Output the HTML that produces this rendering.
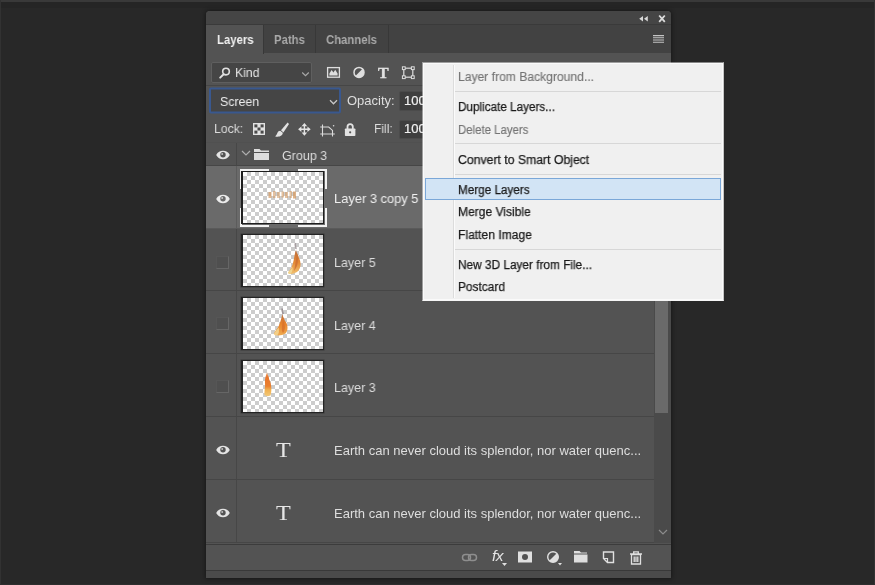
<!DOCTYPE html>
<html>
<head>
<meta charset="utf-8">
<title>Layers</title>
<style>
html,body{margin:0;padding:0;}
body{width:875px;height:585px;background:#282828;position:relative;overflow:hidden;font-family:"Liberation Sans",sans-serif;font-size:13px;color:#dcdcdc;}
.abs{position:absolute;}
.t{position:absolute;will-change:transform;white-space:nowrap;line-height:16px;transform-origin:0 50%;}
#topstrip{left:0;top:0;width:875px;height:1.5px;background:#393939;}
#panel{left:206px;top:11px;width:465px;height:567px;background:#535353;border-radius:4px 4px 0 0;overflow:hidden;box-shadow:0 0 4px 1px rgba(0,0,0,.4);}
#titlebar{left:0;top:0;width:465px;height:13px;background:#454545;}
#tabrow{left:0;top:13px;width:465px;height:29px;background:#424242;border-top:1px solid #3a3a3a;box-sizing:border-box;}
.tab{position:absolute;top:0;height:28px;box-sizing:border-box;border-right:1px solid #383838;}
.tab span{position:absolute;will-change:transform;top:7px;font-weight:bold;white-space:nowrap;transform-origin:0 50%;transform:scaleX(.87);line-height:16px;color:#a9a9a9;}
#tabL{left:0;width:58px;background:#535353;height:29px;}
#tabL span{color:#f0f0f0;}
.dd{position:absolute;box-sizing:border-box;background:#454545;border:1px solid #5f5f5f;border-radius:2px;}
.field{position:absolute;box-sizing:border-box;background:#3e3e3e;border:1px solid #4b4b4b;border-radius:2px;}
.row{position:absolute;left:0;width:448px;box-sizing:border-box;border-bottom:1px solid #464646;}
.eyecol{position:absolute;left:0;top:0;bottom:0;width:30px;border-right:1px solid #474747;}
.thumb{position:absolute;left:35px;width:83px;height:53px;background:#242424;box-shadow:0 0 0 .5px #3a3a3a;}
.chk{position:absolute;left:1.500px;top:1px;width:80.500px;height:51px;
 background-color:#fff;
 background-image:linear-gradient(45deg,#ccc 25%,transparent 25%,transparent 75%,#ccc 75%),linear-gradient(45deg,#ccc 25%,transparent 25%,transparent 75%,#ccc 75%);
 background-size:8px 8px;background-position:0 0,4px 4px;}
.hid{position:absolute;left:10px;width:12.5px;height:13px;box-sizing:border-box;background:#4f4f4f;border:1px solid #565656;border-right-color:#666;border-bottom-color:#666;}
.lname{position:absolute;left:128.3px;will-change:transform;transform-origin:0 50%;white-space:nowrap;line-height:16px;color:#dedede;}
#menu{left:422px;top:62px;width:302px;height:239px;background:#f0f0f0;background-clip:padding-box;border:1px solid #f6f6f6;border-top-color:rgba(250,250,250,.45);border-left-color:rgba(250,250,250,.45);border-right-color:rgba(250,250,250,.75);box-sizing:border-box;box-shadow:inset 0 0 0 1px #fafafa;}
.mi{position:absolute;will-change:transform;left:34.9px;-webkit-text-stroke:.25px currentColor;white-space:nowrap;line-height:16px;font-size:12.5px;color:#1a1a1a;transform-origin:0 50%;transform:scaleX(.95);}
.mi.dis{color:#747474;-webkit-text-stroke:.15px currentColor;}
.sep{position:absolute;left:32px;right:2px;height:1px;background:#d7d7d7;}
</style>
</head>
<body>
<div id="topstrip" class="abs"></div>
<div class="abs" style="left:0;top:1.5px;width:875px;height:6px;background:#252525"></div>
<div class="abs" style="left:0;top:0;width:1px;height:585px;background:#323232"></div>
<div class="abs" style="left:874px;top:0;width:1px;height:585px;background:#323232"></div>
<div class="abs" style="left:0;top:584px;width:875px;height:1px;background:#2e2e2e"></div>
<div id="panel" class="abs">
  <div id="titlebar" class="abs">
    <svg class="abs" style="left:432px;top:3px" width="30" height="10" viewBox="0 0 30 10">
      <path d="M5 2 L5 7.400 L1.200 4.700Z M9.800 2 L9.800 7.400 L6 4.700Z" fill="#d8d8d8"/>
      <path d="M21.200 1.500 L26.800 7.900 M26.800 1.500 L21.200 7.900" stroke="#dcdcdc" stroke-width="1.800" fill="none"/>
    </svg>
  </div>
  <div id="tabrow" class="abs">
    <div class="tab" id="tabL"><span style="left:11px">Layers</span></div>
    <div class="tab" style="left:58px;width:52px"><span style="left:10px">Paths</span></div>
    <div class="tab" style="left:110px;width:73px"><span style="left:10px">Channels</span></div>
    <svg class="abs" style="left:447px;top:10px" width="12" height="9" viewBox="0 0 12 9">
      <path d="M0 .600H11M0 2.800H11M0 5H11M0 7.200H11" stroke="#c4c4c4" stroke-width="1.100"/>
    </svg>
  </div>

  <!-- filter row -->
  <div class="dd" style="left:5px;top:51px;width:101px;height:21px"></div>
  <svg class="abs" style="left:12px;top:55px" width="14" height="14" viewBox="0 0 14 14">
    <circle cx="8" cy="5.600" r="3.300" fill="none" stroke="#e0e0e0" stroke-width="1.600"/>
    <path d="M5.600 8.200 L2.200 11.600" stroke="#e0e0e0" stroke-width="2" stroke-linecap="round"/>
  </svg>
  <span class="t" style="left:29px;top:54px;color:#e6e6e6;transform:scaleX(.94)">Kind</span>
  <svg class="abs" style="left:94.500px;top:59.500px" width="9" height="7" viewBox="0 0 9 7"><path d="M1.200 1.500 L4.500 4.600 L7.800 1.500" fill="none" stroke="#a8a8a8" stroke-width="1.200"/></svg>

  <!-- filter icons -->
  <svg class="abs" style="left:120px;top:54px" width="100" height="16" viewBox="0 0 100 16">
    <g fill="none" stroke="#dedede" stroke-width="1.300">
      <rect x="1.600" y="2.600" width="11.800" height="9.600"/>
    </g>
    <path d="M3.400 10.400 V8.600 L5.600 5 L7.400 7.600 L9.200 4.800 L11.600 8.600 V10.400Z" fill="#dedede"/>
    <circle cx="33" cy="7.400" r="5" fill="none" stroke="#dedede" stroke-width="1.500"/>
    <path d="M29.400 11 A5 5 0 0 0 36.600 3.800Z" fill="#dedede"/>
    <g fill="none" stroke="#dedede" stroke-width="1.200">
      <rect x="77.800" y="3.200" width="9" height="9"/>
    </g>
    <g fill="#505050" stroke="#dedede" stroke-width="1"><rect x="76.400" y="1.800" width="2.800" height="2.800"/><rect x="85.400" y="1.800" width="2.800" height="2.800"/><rect x="76.400" y="10.800" width="2.800" height="2.800"/><rect x="85.400" y="10.800" width="2.800" height="2.800"/></g>
  </svg>
  <span class="t" style="left:171.8px;top:53.5px;font-family:'Liberation Serif',serif;font-weight:bold;font-size:14.3px;color:#e2e2e2;-webkit-text-stroke:.3px #e2e2e2;transform:scaleX(1.12)">T</span>

  <div class="abs" style="left:0;top:74px;width:465px;height:1px;background:#464646"></div>
  <!-- blend row -->
  <div class="dd" style="left:3px;top:76px;width:132px;height:26px;border:2px solid #39588f;background:#454545;border-radius:2px;transform:translateY(.5px)"></div>
  <span class="t" style="left:14px;top:83px;color:#ececec;transform:scaleX(.95)">Screen</span>
  <svg class="abs" style="left:122.500px;top:88px" width="9" height="7" viewBox="0 0 9 7"><path d="M1 1.3 L4.5 4.8 L8 1.3" fill="none" stroke="#c8c8c8" stroke-width="1.3"/></svg>
  <span class="t" style="left:141px;top:82px;color:#dedede">Opacity:</span>
  <div class="field" style="left:192.500px;top:79.5px;width:60px;height:20px"></div>
  <span class="t" style="left:197.7px;top:82px;color:#f0f0f0;-webkit-text-stroke:.2px #f0f0f0">100</span>

  <!-- lock row -->
  <span class="t" style="left:8px;top:109.5px;color:#dcdcdc;transform:scaleX(.94)">Lock:</span>
  <svg class="abs" style="left:44px;top:110px" width="110" height="18" viewBox="0 0 110 18">
    <!-- checker: page x 253-265, y 123-135 -->
    <rect x="3" y="2" width="12" height="12" fill="#e2e2e2"/>
    <g fill="#4a4a4a"><rect x="4.400" y="3.400" width="3" height="3"/><rect x="10.600" y="3.400" width="3" height="3"/><rect x="7.500" y="6.500" width="3" height="3"/><rect x="4.400" y="9.600" width="3" height="3"/><rect x="10.600" y="9.600" width="3" height="3"/></g>
    <!-- brush -->
    <path d="M37.600 1.600 L31 9.200 L33.400 11.400 L39 3Z" fill="#e2e2e2"/>
    <path d="M30.200 9.800 C27.200 9.800 27.600 13.400 25.200 15.400 C29 16.400 33 14.800 32.800 11.800Z" fill="#e2e2e2"/>
    <!-- move -->
    <g stroke="#e2e2e2" stroke-width="1.400" fill="none"><path d="M54.400 4V12.600M50 8.300H58.800"/></g>
    <path d="M54.400 1.900 L57.200 5.200 H51.600Z M54.400 14.700 L57.200 11.400 H51.600Z M48.100 8.300 L51.400 5.500 V11.100Z M60.700 8.300 L57.400 5.500 V11.100Z" fill="#e2e2e2"/>
    <!-- artboard crop -->
    <g stroke="#dadada" stroke-width="1.100" fill="none"><path d="M72.500 3.600V15.400M70.200 6H78.700L82.500 9.400V15.400M70.200 13H84.800"/></g>
    <circle cx="83.600" cy="4.700" r=".800" fill="#dadada"/>
    <!-- lock -->
    <rect x="94.900" y="7.400" width="10.500" height="7.600" rx=".8" fill="#e2e2e2"/>
    <path d="M97.500 8 V5.800 A2.650 2.650 0 0 1 102.800 5.800 V8" fill="none" stroke="#e2e2e2" stroke-width="1.800"/>
    <circle cx="100.150" cy="11.300" r="1.100" fill="#535353"/>
  </svg>
  <span class="t" style="left:168px;top:110px;color:#dcdcdc;transform:scaleX(.93)">Fill:</span>
  <div class="field" style="left:192.500px;top:109px;width:60px;height:19px"></div>
  <span class="t" style="left:197.7px;top:110px;color:#f0f0f0;-webkit-text-stroke:.2px #f0f0f0">100</span>

  <!-- layer list -->
  <div class="abs" style="left:0;top:131px;width:448px;height:1px;background:#505050"></div>
  <div class="row" style="top:132px;height:23px">
    <div class="eyecol"></div>
    <svg class="abs eye" style="left:9.500px;top:6.5px" width="14" height="10" viewBox="0 0 14 10"><path d="M.200 5 C2.800 -.600 11.200 -.600 13.800 5 C11.200 10.600 2.800 10.600 .200 5Z" fill="#e4e4e4"/><circle cx="7" cy="4.800" r="2.700" fill="#535353"/><circle cx="6.200" cy="4" r="1" fill="#e4e4e4" opacity=".75"/></svg>
    <svg class="abs" style="left:35px;top:7px" width="10" height="7" viewBox="0 0 10 7"><path d="M1 1 L5 5 L9 1" fill="none" stroke="#adadad" stroke-width="1.200"/></svg>
    <svg class="abs" style="left:47px;top:5px" width="17" height="13" viewBox="0 0 17 13"><path d="M1 1 H6.5 L8 2.6 H16 V4 H1Z M1 5 H16 V12 H1Z" fill="#dedede"/></svg>
    <span class="lname" style="left:75.8px;top:4.5px;transform-origin:0 50%;transform:scaleX(.96)">Group 3</span>
  </div>

  <div class="row" style="top:155px;height:63px;background:#6a6a6a;border-bottom-color:#5a5a5a">
    <div class="eyecol" style="border-right-color:#5c5c5c"></div>
    <svg class="abs eye" style="left:9.500px;top:27.5px" width="14" height="10" viewBox="0 0 14 10"><path d="M.200 5 C2.800 -.600 11.200 -.600 13.800 5 C11.200 10.600 2.800 10.600 .200 5Z" fill="#ececec"/><circle cx="7" cy="4.800" r="2.700" fill="#6a6a6a"/><circle cx="6.200" cy="4" r="1" fill="#ececec" opacity=".75"/></svg>
    <!-- bracket frame -->
    <svg class="abs" style="left:34px;top:3px" width="87" height="58" viewBox="0 0 87 58">
      <path d="M1 20 V1 H29 M58 1 H86 V20 M86 39 V57 H58 M29 57 H1 V39" fill="none" stroke="#f2f2f2" stroke-width="2"/>
    </svg>
    <div class="thumb" style="top:5px;background:#1e1e1e;box-shadow:none"><div class="chk"></div>
      <svg class="abs" style="left:26px;top:18px;filter:blur(.6px)" width="32" height="12" viewBox="0 0 32 12">
        <g fill="#d49a62"><rect x="1.500" y="3" width="3" height="6" opacity=".7"/><rect x="6" y="2" width="2.500" height="7" opacity=".6"/><rect x="10" y="3" width="3" height="6" opacity=".55"/><rect x="14.500" y="2.500" width="2.500" height="6" opacity=".6"/><rect x="18" y="3" width="3" height="6" opacity=".6"/><rect x="22.500" y="2" width="2.500" height="7" opacity=".55"/><rect x="26" y="2.500" width="3" height="7" opacity=".75"/></g>
      </svg>
    </div>
    <span class="lname" style="top:25.3px;color:#f0f0f0;transform:scaleX(.99)">Layer 3 copy 5</span>
  </div>

  <div class="row" style="top:218px;height:62px">
    <div class="eyecol"></div>
    <div class="hid" style="top:26.5px"></div>
    <div class="thumb" style="top:5px"><div class="chk"></div>
      <svg class="abs" style="left:40px;top:4px;filter:blur(.5px)" width="30" height="40" viewBox="0 0 30 40">
        <defs><linearGradient id="fg5" x1="0" y1="0" x2="0" y2="1"><stop offset="0" stop-color="#b8683a"/><stop offset=".55" stop-color="#e58a35"/><stop offset="1" stop-color="#efc070"/></linearGradient></defs>
        <path d="M14.500 5 C13.500 7 15 9 15 11" stroke="#9c9296" stroke-width="1.600" fill="none" opacity=".8"/>
        <path d="M15.500 10.500 C14 14 17.500 16 18 20 C20.500 25 20 31 16 34 C12 36.500 8 36.500 7 34.500 C9.500 32 11.500 28 12.500 23 C13.500 18 14 14 15.500 10.500Z" fill="url(#fg5)"/>
        <path d="M16 16 C17.500 21 17.500 28 13 33 C14 28 15 22 16 16Z" fill="#c86a30" opacity=".75"/>
        <path d="M7 34.500 C8.500 33 10.500 31 11.500 29 C12 32 11 35 9 36 C8 36 7 35.500 7 34.500Z" fill="#f0d590"/>
      </svg>
    </div>
    <span class="lname" style="top:25.5px;transform:scaleX(.96)">Layer 5</span>
  </div>

  <div class="row" style="top:280px;height:63px">
    <div class="eyecol"></div>
    <div class="hid" style="top:26px"></div>
    <div class="thumb" style="top:6px"><div class="chk"></div>
      <svg class="abs" style="left:30px;top:9px;filter:blur(.5px)" width="20" height="32" viewBox="0 0 20 32">
        <defs><linearGradient id="fg4" x1="0" y1="0" x2="0" y2="1"><stop offset="0" stop-color="#b86a40"/><stop offset=".5" stop-color="#e8842c"/><stop offset="1" stop-color="#eeaa50"/></linearGradient></defs>
        <path d="M11.300 2.500 C10.500 4.500 12 6 12 8" stroke="#8e8488" stroke-width="1.600" fill="none" opacity=".85"/>
        <path d="M12 6.500 C10.500 10 13.500 12 14 15 C17 18 17.500 24 14.500 27.500 C10.500 30 5 30 3 28 C3.500 25 6 23.500 7.500 20.500 C9.500 16.500 10.500 11 12 6.500Z" fill="url(#fg4)"/>
        <path d="M12 14 C14 18 15 23 12 27 C10 25 11 19 12 14Z" fill="#d8702a" opacity=".8"/>
        <path d="M3 28 C4 25.500 6 24 7.500 21.500 C8.500 25 8 28.500 5.500 29.500 C4.500 29.500 3.500 29 3 28Z" fill="#f3cf88"/>
      </svg>
    </div>
    <span class="lname" style="top:26.8px;transform:scaleX(.96)">Layer 4</span>
  </div>

  <div class="row" style="top:343px;height:63px">
    <div class="eyecol"></div>
    <div class="hid" style="top:26px"></div>
    <div class="thumb" style="top:6px"><div class="chk"></div>
      <svg class="abs" style="left:20px;top:9px;filter:blur(.5px)" width="14" height="30" viewBox="0 0 14 30">
        <defs><linearGradient id="fg3" x1="0" y1="0" x2="0" y2="1"><stop offset="0" stop-color="#f0b888"/><stop offset=".25" stop-color="#e8742a"/><stop offset=".6" stop-color="#ea8030"/><stop offset=".75" stop-color="#f0b050"/><stop offset="1" stop-color="#f2c878"/></linearGradient></defs>
        <path d="M6.500 2 C5 5 8.500 7 8 10 C10.500 14 11 22 9.500 26.500 C7 27.500 4.500 27.500 3.500 26 C3 22 4.500 18 4 14 C3.500 10 5 6 6.500 2Z" fill="url(#fg3)"/>
      </svg>
    </div>
    <span class="lname" style="top:26.3px;transform:scaleX(.96)">Layer 3</span>
  </div>

  <div class="row" style="top:406px;height:63px">
    <div class="eyecol"></div>
    <svg class="abs eye" style="left:9.500px;top:27.5px" width="14" height="10" viewBox="0 0 14 10"><path d="M.200 5 C2.800 -.600 11.200 -.600 13.800 5 C11.200 10.600 2.800 10.600 .200 5Z" fill="#e4e4e4"/><circle cx="7" cy="4.800" r="2.700" fill="#535353"/><circle cx="6.200" cy="4" r="1" fill="#e4e4e4" opacity=".75"/></svg>
    <span class="abs" style="left:69.5px;top:20.5px;font-family:'Liberation Serif',serif;font-size:22px;line-height:24px;color:#e6e6e6;will-change:transform;transform-origin:0 50%;transform:scaleX(1.1)">T</span>
    <span class="lname" style="top:26.4px">Earth can never cloud its splendor, nor water quenc...</span>
  </div>

  <div class="row" style="top:469px;height:62.5px">
    <div class="eyecol"></div>
    <svg class="abs eye" style="left:9.500px;top:27.5px" width="14" height="10" viewBox="0 0 14 10"><path d="M.200 5 C2.800 -.600 11.200 -.600 13.800 5 C11.200 10.600 2.800 10.600 .200 5Z" fill="#e4e4e4"/><circle cx="7" cy="4.800" r="2.700" fill="#535353"/><circle cx="6.200" cy="4" r="1" fill="#e4e4e4" opacity=".75"/></svg>
    <span class="abs" style="left:69.5px;top:20.5px;font-family:'Liberation Serif',serif;font-size:22px;line-height:24px;color:#e6e6e6;will-change:transform;transform-origin:0 50%;transform:scaleX(1.1)">T</span>
    <span class="lname" style="top:26.2px">Earth can never cloud its splendor, nor water quenc...</span>
  </div>

  <!-- scrollbar -->
  <div class="abs" style="left:448px;top:132px;width:17px;height:400px;background:#4a4a4a"></div>
  <div class="abs" style="left:449px;top:132px;width:13px;height:270px;background:#6a6a6a"></div>
  <svg class="abs" style="left:452px;top:518px" width="10" height="7" viewBox="0 0 10 7"><path d="M1 1 L5 5 L9 1" fill="none" stroke="#8c8c8c" stroke-width="1.2"/></svg>

  <!-- bottom bar -->
  <div class="abs" style="left:0;top:532.5px;width:465px;height:1.5px;background:#3c3c3c"></div>
  <div class="abs" style="left:0;top:534px;width:465px;height:25px;background:#535353"></div>
  <div class="abs" style="left:0;top:559px;width:465px;height:8px;background:#4b4b4b;border-top:1.5px solid #393939;box-sizing:border-box"></div>
  <svg class="abs" style="left:250px;top:535.5px" width="200" height="22" viewBox="0 0 200 22">
    <!-- link -->
    <g fill="none" stroke="#8e8e8e" stroke-width="1.5"><rect x="6.5" y="7.5" width="8" height="6" rx="3"/><rect x="12.500" y="7.5" width="8" height="6" rx="3"/></g>
    <!-- mask -->
    <rect x="62" y="4.500" width="14" height="11" fill="#e0e0e0"/><circle cx="69" cy="10" r="3" fill="#535353"/>
    <!-- adj -->
    <circle cx="97" cy="10" r="5.300" fill="none" stroke="#e0e0e0" stroke-width="1.4"/><path d="M93.200 13.800 A5.300 5.300 0 0 0 100.800 6.200Z" fill="#e0e0e0"/><path d="M102 16 h4 l-2 2.500z" fill="#e0e0e0"/>
    <!-- folder -->
    <path d="M118 4 H123.500 L125 5.500 H131 V6.500 H118Z M118 7.500 H131.500 V15.500 H118Z" fill="#dedede"/>
    <!-- new layer -->
    <path d="M147.500 5 H157.500 V15.500 H151.500 L147.500 11.500Z" fill="none" stroke="#e0e0e0" stroke-width="1.4"/><path d="M147.500 11.500 H151.500 V15.500" fill="none" stroke="#e0e0e0" stroke-width="1.200"/>
    <!-- trash -->
    <g fill="none" stroke="#e0e0e0" stroke-width="1.300"><path d="M175.500 7.500 H184.500 V17 H175.500Z M174 7 H186 M177.700 6.500 V4.800 H182.300 V6.500 M178.200 9.500 V15 M180 9.500 V15 M181.800 9.500 V15"/></g>
  </svg>
  <span class="t" style="left:285.5px;top:537px;font-style:italic;font-size:15.5px;color:#e4e4e4;letter-spacing:-.5px">fx</span>
  <svg class="abs" style="left:295.500px;top:551.500px" width="6" height="4" viewBox="0 0 6 4"><path d="M0 0 h5 l-2.500 3z" fill="#e0e0e0"/></svg>
</div>

<!-- context menu -->
<div id="menu" class="abs">
  <div class="abs" style="left:30px;top:2px;bottom:2px;width:1px;background:#dcdcdc"></div>
  <div class="abs" style="left:31px;top:2px;bottom:2px;width:1px;background:#fbfbfb"></div>
  <span class="mi dis" style="top:6.4px;transform:scaleX(.969)">Layer from Background...</span>
  <div class="sep" style="top:28px"></div>
  <span class="mi" style="top:36.2px;transform:scaleX(.937)">Duplicate Layers...</span>
  <span class="mi dis" style="top:58.7px;transform:scaleX(.913)">Delete Layers</span>
  <div class="sep" style="top:80px"></div>
  <span class="mi" style="top:88.5px;transform:scaleX(.979)">Convert to Smart Object</span>
  <div class="sep" style="top:111px"></div>
  <div class="abs" style="left:2px;top:115px;width:296px;height:22px;box-sizing:border-box;background:#d2e4f5;border:1px solid #7aa7d8"></div>
  <span class="mi" style="top:118.5px;transform:scaleX(.937)">Merge Layers</span>
  <span class="mi" style="top:141.1px;transform:scaleX(.964)">Merge Visible</span>
  <span class="mi" style="top:163.7px;transform:scaleX(.967)">Flatten Image</span>
  <div class="sep" style="top:186px"></div>
  <span class="mi" style="top:193.7px;transform:scaleX(.946)">New 3D Layer from File...</span>
  <span class="mi" style="top:216.1px;transform:scaleX(.951)">Postcard</span>
</div>
</body>
</html>
